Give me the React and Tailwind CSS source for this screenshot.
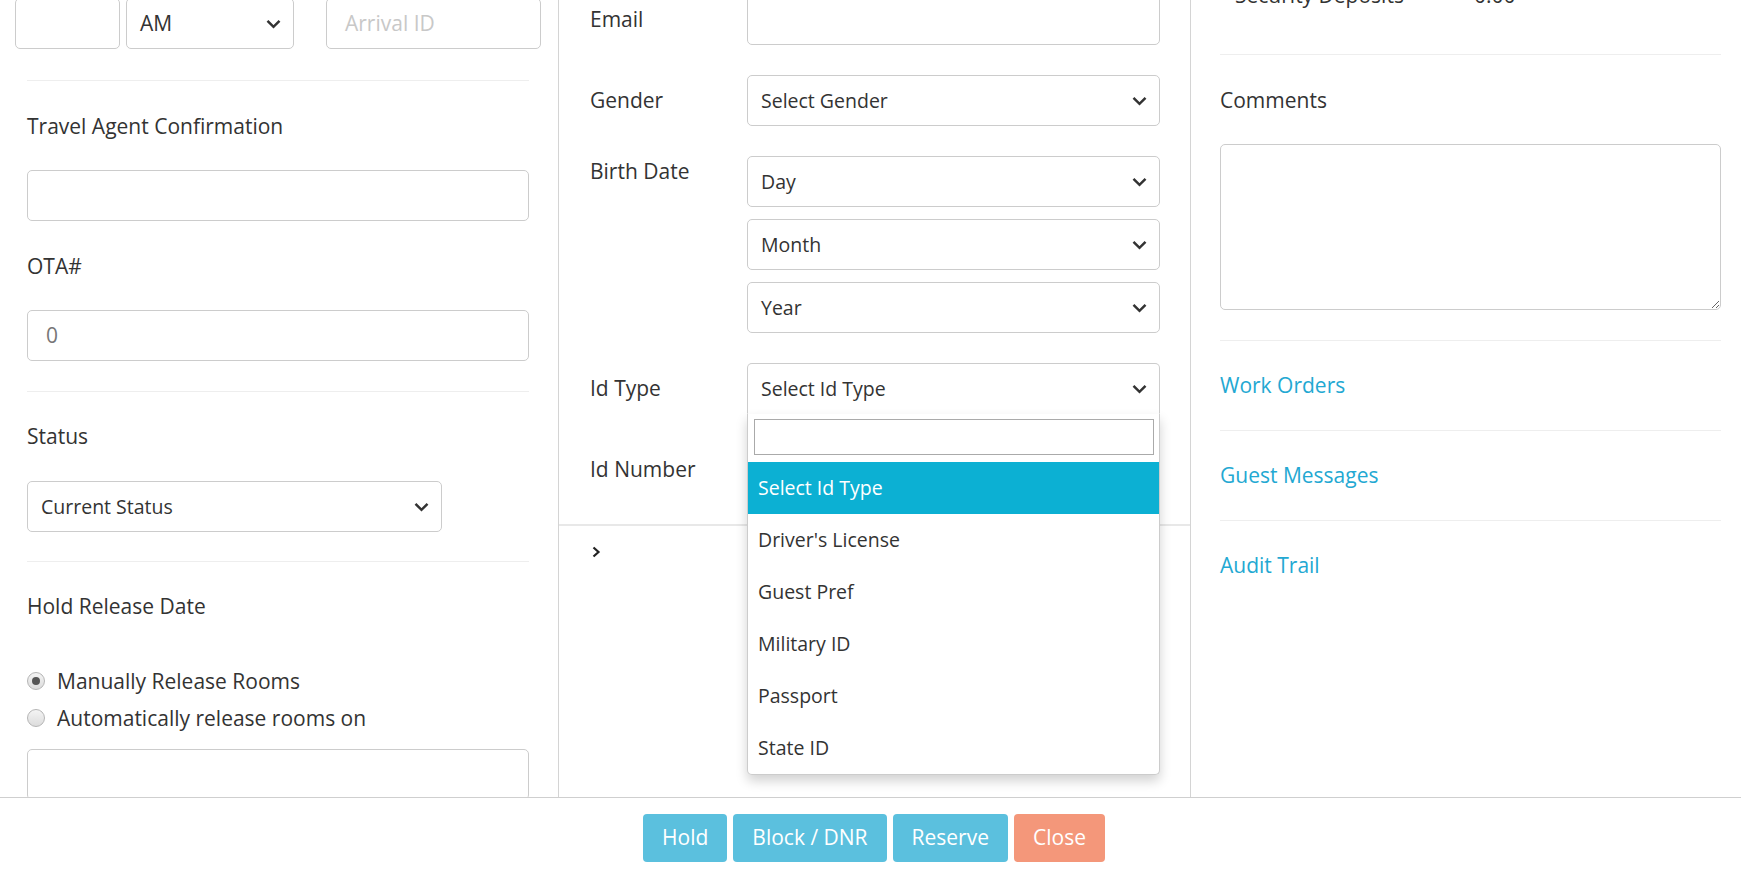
import { useState } from 'react'

// chevron used inside the fake selects
function Chevron({ className = '' }) {
  return (
    <svg width="15" height="10" viewBox="0 0 15 10" className={className}>
      <polyline points="1.5,1.8 7.5,7.8 13.5,1.8" fill="none" stroke="#333" strokeWidth="2.5" />
    </svg>
  )
}

function TextBox({ className = '', placeholder = '', value = '', muted = false }) {
  return (
    <div
      className={`h-[51px] rounded-[5px] border border-[#ccc] bg-white px-[18px] flex items-center ${className}`}
    >
      {value ? (
        <span className={muted ? 'text-[#777]' : 'text-[#333]'}>{value}</span>
      ) : (
        <span className="text-[#c8c8c8]">{placeholder}</span>
      )}
    </div>
  )
}

function SelectBox({ label, className = '', open = false, children }) {
  return (
    <div
      className={`relative h-[51px] border border-[#ccc] bg-white pl-[13px] pr-[12px] flex items-center justify-between text-[19.5px] ${
        open ? 'rounded-t-[5px] border-b-transparent' : 'rounded-[5px]'
      } ${className}`}
    >
      <span>{label}</span>
      <Chevron />
      {children}
    </div>
  )
}

function Radio({ checked, label }) {
  return (
    <label className="flex items-center leading-[30px]">
      <span className="w-[18px] h-[18px] rounded-full border border-[#b5b5b5] bg-gradient-to-b from-[#f4f4f4] to-[#dcdcdc] flex items-center justify-center">
        {checked && <span className="w-[8px] h-[8px] rounded-full bg-[#555]" />}
      </span>
      <span className="ml-[12px]">{label}</span>
    </label>
  )
}

const idTypes = ['Select Id Type', "Driver's License", 'Guest Pref', 'Military ID', 'Passport', 'State ID']

export default function App() {
  const [picked] = useState(0)

  return (
    <div className="w-[1741px] h-[870px] flex flex-col bg-white font-['Open_Sans',sans-serif] text-[21px] text-[#333] overflow-hidden">
      <div className="flex h-[797px] overflow-hidden">
        {/* Left column */}
        <div className="w-[559px] shrink-0 border-r border-[#d4d4d4] overflow-hidden">
          <div className="-mt-[2px] flex pl-[15px]">
            <TextBox className="w-[105px]" />
            <SelectBox label="AM" className="ml-[6px] w-[168px] text-[21px]" />
            <TextBox className="ml-[32px] w-[215px]" placeholder="Arrival ID" />
          </div>
          <div className="pl-[27px] pr-[29px]">
            <div className="mt-[31px] border-t border-[#eee]" />
            <div className="mt-[30px] leading-[30px]">Travel Agent Confirmation</div>
            <TextBox className="mt-[29px]" />
            <div className="mt-[30px] leading-[30px]">OTA#</div>
            <TextBox className="mt-[29px]" value="0" muted />
            <div className="mt-[30px] border-t border-[#eee]" />
            <div className="mt-[29px] leading-[30px]">Status</div>
            <SelectBox label="Current Status" className="mt-[30px] w-[415px]" />
            <div className="mt-[29px] border-t border-[#eee]" />
            <div className="mt-[29px] leading-[30px]">Hold Release Date</div>
            <div className="mt-[45px]">
              <Radio checked label="Manually Release Rooms" />
            </div>
            <div className="mt-[7px]">
              <Radio label="Automatically release rooms on" />
            </div>
            <TextBox className="mt-[16px]" />
          </div>
        </div>

        {/* Middle column */}
        <div className="w-[632px] shrink-0 border-r border-[#d4d4d4]">
          <div className="pl-[31px] pr-[30px]">
            <div className="-mt-[6px] flex">
              <div className="w-[157px] pt-[10px] leading-[30px]">Email</div>
              <TextBox className="flex-1" />
            </div>
            <div className="mt-[30px] flex">
              <div className="w-[157px] pt-[10px] leading-[30px]">Gender</div>
              <SelectBox label="Select Gender" className="flex-1" />
            </div>
            <div className="mt-[30px] flex">
              <div className="w-[157px] leading-[30px]">Birth Date</div>
              <div className="flex-1 flex flex-col gap-[12px]">
                <SelectBox label="Day" />
                <SelectBox label="Month" />
                <SelectBox label="Year" />
              </div>
            </div>
            <div className="mt-[30px] flex relative z-10">
              <div className="w-[157px] pt-[10px] leading-[30px]">Id Type</div>
              <SelectBox label="Select Id Type" className="flex-1" open>
                <div className="absolute left-[-1px] right-[-1px] top-[50px] bg-white border-x border-b border-[#ccc] rounded-b-[5px] shadow-[0_6px_12px_rgba(0,0,0,0.18)]">
                  <div className="pl-[6px] pr-[5px] pt-[5px]">
                    <input className="w-full h-[36px] border border-[#aaa] outline-none px-[6px]" />
                  </div>
                  <ul className="mt-[7px]">
                    {idTypes.map((t, i) => (
                      <li
                        key={t}
                        className={`h-[52px] pl-[10px] flex items-center ${
                          i === picked ? 'bg-[#0cb0d3] text-white' : 'text-[#333]'
                        }`}
                      >
                        {t}
                      </li>
                    ))}
                  </ul>
                </div>
              </SelectBox>
            </div>
            <div className="mt-[30px] flex">
              <div className="w-[157px] pt-[10px] leading-[30px]">Id Number</div>
              <TextBox className="flex-1" />
            </div>
          </div>
          <div className="mt-[29px] border-t-2 border-[#e8e8e8]" />
          <div className="mt-[20px] pl-[33px]">
            <svg width="9" height="12" viewBox="0 0 9 12">
              <polyline points="1.5,1.5 6.5,6 1.5,10.5" fill="none" stroke="#222" strokeWidth="2.2" />
            </svg>
          </div>
        </div>

        {/* Right column */}
        <div className="flex-1 pl-[29px] pr-[20px]">
          <div className="-mt-[20px] flex pl-[15px] leading-[30px]">
            <span className="w-[239px]">Security Deposits</span>
            <span>0.00</span>
          </div>
          <div className="mt-[44px] border-t border-[#eee]" />
          <div className="border-b border-[#eee] pb-[30px]">
            <div className="mt-[30px] leading-[30px]">Comments</div>
            <textarea className="mt-[29px] block w-full h-[166px] rounded-[5px] border border-[#ccc] outline-none" />
          </div>
          {['Work Orders', 'Guest Messages', 'Audit Trail'].map((l, i) => (
            <div
              key={l}
              className={`pt-[29px] pb-[30px] leading-[30px] text-[#23a8d2] ${i < 2 ? 'border-b border-[#eee]' : ''}`}
            >
              {l}
            </div>
          ))}
        </div>
      </div>

      {/* Footer buttons */}
      <div className="h-[73px] border-t border-[#cfcfcf] flex justify-center items-start pt-[16px] pl-[7px] gap-[6px]">
        <button className="h-[48px] px-[19px] rounded-[4px] bg-[#5bc0de] text-white">Hold</button>
        <button className="h-[48px] px-[19px] rounded-[4px] bg-[#5bc0de] text-white">Block / DNR</button>
        <button className="h-[48px] px-[19px] rounded-[4px] bg-[#5bc0de] text-white">Reserve</button>
        <button className="h-[48px] px-[19px] rounded-[4px] bg-[#f4977a] text-white">Close</button>
      </div>
    </div>
  )
}
